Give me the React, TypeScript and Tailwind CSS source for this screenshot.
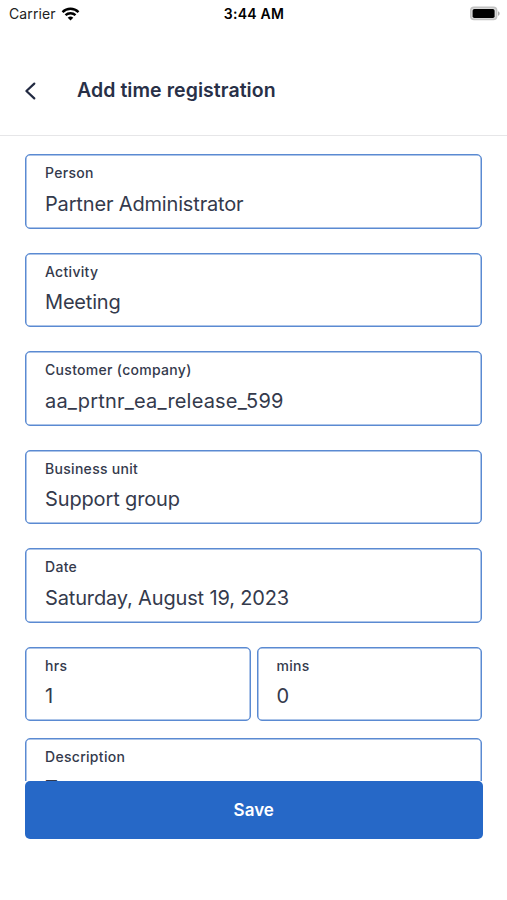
interface FieldProps {
  label: string;
  value: string;
  valueClass?: string;
}

const fields: FieldProps[] = [
  { label: 'Person', value: 'Partner Administrator', valueClass: 'tracking-[-0.16px]' },
  { label: 'Activity', value: 'Meeting', valueClass: 'tracking-[-0.18px]' },
  { label: 'Customer (company)', value: 'aa_prtnr_ea_release_599', valueClass: 'tracking-[0.18px]' },
  { label: 'Business unit', value: 'Support group', valueClass: 'tracking-[-0.14px]' },
  { label: 'Date', value: 'Saturday, August 19, 2023', valueClass: 'tracking-[-0.15px]' },
];

function Field({ label, value, valueClass = '' }: FieldProps) {
  return (
    <div className="h-[74.5px] flex-1 shrink-0 basis-[74.5px] rounded-[5px] border border-[#5a8ad2] px-[19px] pt-[8px] shadow-[inset_0_0_0_0.5px_#5a8ad2]">
      <div className="h-5 text-[14px] leading-5 font-medium tracking-[0.3px] text-[#343a4c]">{label}</div>
      <div className={`mt-[5.5px] h-[30px] text-[20px] leading-[30px] text-[#343a4c] ${valueClass}`}>{value}</div>
    </div>
  );
}

function StatusBar() {
  return (
    <div className="grid h-[27px] grid-cols-3 items-center pr-[7px] pl-[9px] text-[14px] text-[#222]">
      <div className="flex items-center gap-[5px]">
        <span className="tracking-[0.1px]">Carrier</span>
        <svg width="19" height="14" viewBox="0 0 18 14" fill="none" stroke="#000" strokeWidth="2.4">
          <path d="M1 5.1a11.4 11.4 0 0 1 16 0" />
          <path d="M4 8.2a7.2 7.2 0 0 1 10 0" />
          <path d="M9 13.6 6.2 10.8a4 4 0 0 1 5.6 0Z" fill="#000" stroke="none" />
        </svg>
      </div>
      <span className="-ml-px text-center font-semibold tracking-[0.25px] whitespace-nowrap text-black">3:44 AM</span>
      <svg className="justify-self-end" width="31" height="15" viewBox="0 0 31 15">
        <rect x="1" y="0.6" width="27.4" height="13.6" rx="4" fill="#c2c2c2" />
        <rect x="2.4" y="2" width="24.6" height="10.8" rx="3" fill="#fff" fillOpacity="0.4" />
        <rect x="3.6" y="3" width="22" height="9" rx="1.8" fill="#000" />
        <path d="M29 5.2c2.2.8 2.2 3.8 0 4.6Z" fill="#aaa" />
      </svg>
    </div>
  );
}

export default function App() {
  return (
    <div className="flex h-[900px] w-[507px] flex-col overflow-hidden bg-white font-['Inter',sans-serif]">
      <StatusBar />

      <header className="flex h-[109px] shrink-0 items-center border-b border-[#e6e6e8] pt-[19px] pl-[24px]">
        <button className="flex w-[53px] items-center" aria-label="Back">
          <svg width="12" height="18" viewBox="0 0 12 18" fill="none" stroke="#222a42" strokeWidth="2.2" strokeLinecap="round" strokeLinejoin="round">
            <path d="M10.3 1.6 2.4 9l7.9 7.4" />
          </svg>
        </button>
        <h1 className="text-[19.5px] font-semibold tracking-[0.06px] text-[#283047]">Add time registration</h1>
      </header>

      <main className="h-[644.5px] shrink-0 overflow-hidden px-[25px] pt-[18px]">
        <div className="flex flex-col gap-6">
          {fields.map((f) => (
            <Field key={f.label} {...f} />
          ))}
          <div className="flex gap-[6px]">
            <Field label="hrs" value="1" />
            <Field label="mins" value="0" />
          </div>
        </div>
        <div className="mt-[17px] flex">
          <Field label="Description" value="T" />
        </div>
      </main>

      <div className="px-[25px]">
        <button className="h-[58.5px] w-[457.5px] rounded-[5px] bg-[#2668c7] pt-[2px] text-[17px] font-semibold text-white">Save</button>
      </div>
    </div>
  );
}
